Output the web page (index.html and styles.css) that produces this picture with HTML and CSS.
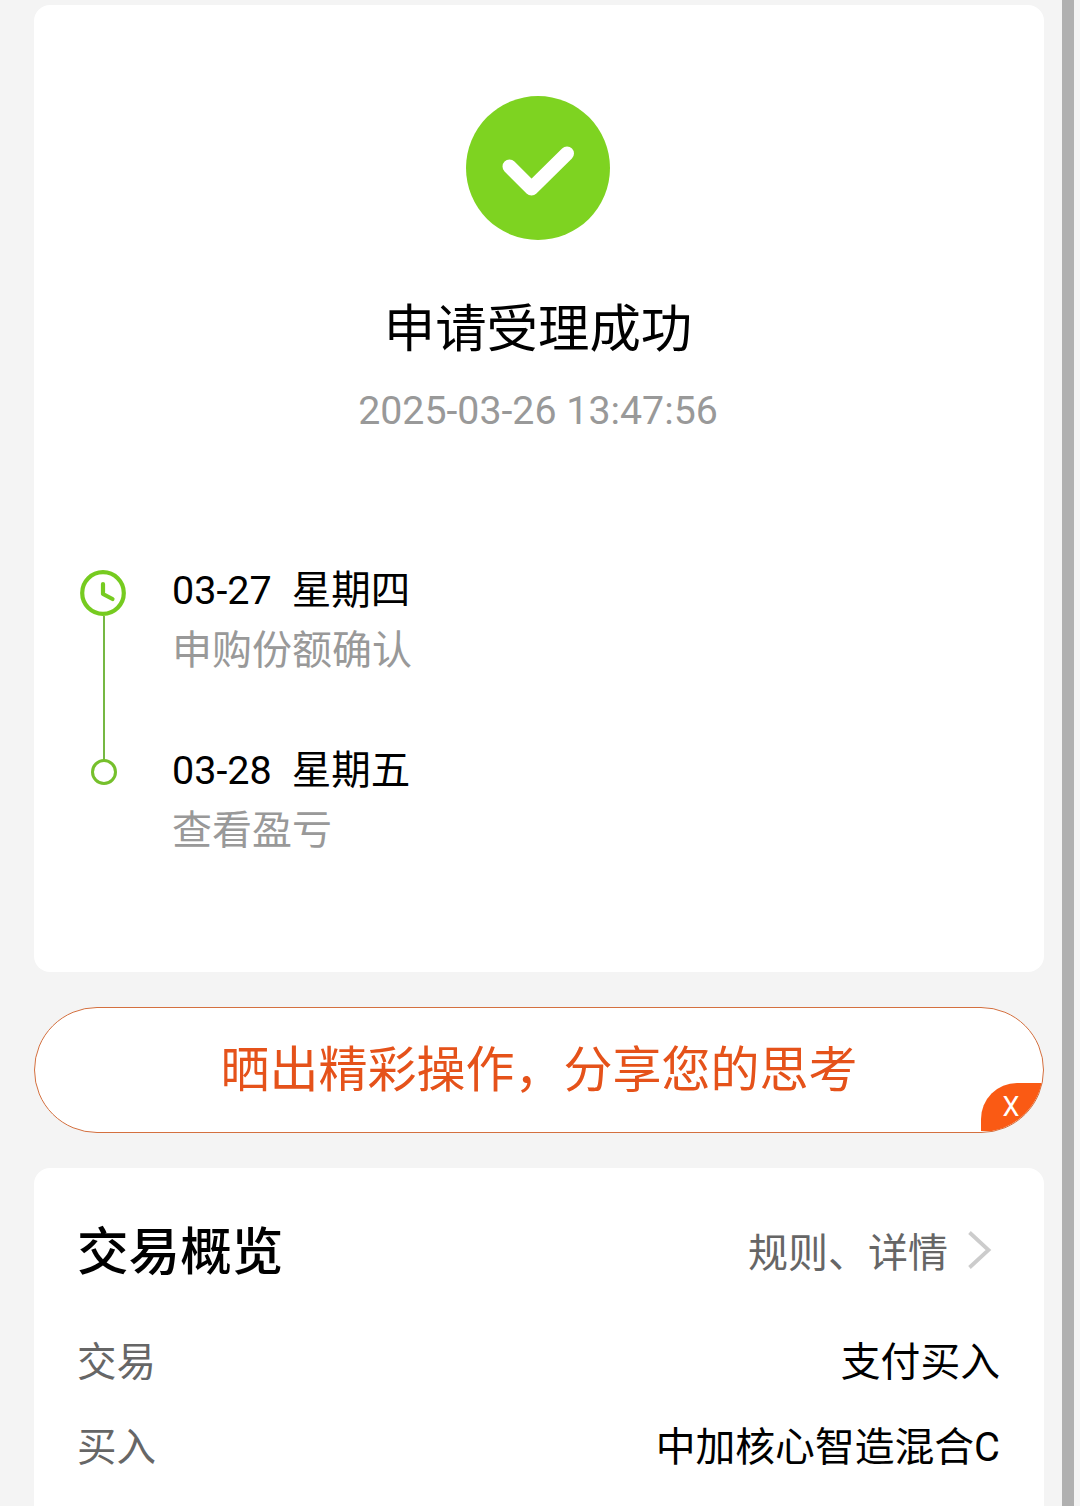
FILE: index.html
```html
<!DOCTYPE html>
<html lang="zh-CN">

<head>
    <meta charset="UTF-8">
    <meta name="viewport" content="width=device-width, initial-scale=1.0">
    <title>申请受理成功</title>
    <link rel="stylesheet" href="styles.css">
</head>

<body>
    <main class="page">
        <section class="card result">
            <svg class="success-icon" viewBox="0 0 144 144">
                <circle cx="72" cy="72" r="72" fill="#7ed321" />
                <path d="M43.5 70.5L65.5 92.5L101 57.5" fill="none" stroke="#fff" stroke-width="14" stroke-linecap="round" stroke-linejoin="round" />
            </svg>
            <h1>申请受理成功</h1>
            <p class="time">2025-03-26 13:47:56</p>

            <ul class="timeline">
                <li class="step">
                    <div class="marker">
                        <svg class="clock" viewBox="0 0 46 46">
                            <circle cx="23" cy="23" r="20.8" fill="none" stroke="#76cb20" stroke-width="4.2" />
                            <path d="M23 14V24L32.5 29" fill="none" stroke="#76cb20" stroke-width="4.2" stroke-linecap="round" stroke-linejoin="round" />
                        </svg>
                        <span class="line"></span>
                    </div>
                    <div class="step-text">
                        <p class="day"><span>03-27</span><span>星期四</span></p>
                        <p class="desc">申购份额确认</p>
                    </div>
                </li>
                <li class="step">
                    <div class="marker">
                        <span class="dot"></span>
                    </div>
                    <div class="step-text">
                        <p class="day"><span>03-28</span><span>星期五</span></p>
                        <p class="desc">查看盈亏</p>
                    </div>
                </li>
            </ul>
        </section>

        <div class="share">
            <span class="share-text">晒出精彩操作，分享您的思考</span>
            <button class="share-close">X</button>
        </div>

        <section class="card overview">
            <div class="overview-header">
                <h2>交易概览</h2>
                <a class="more">规则、详情
                    <svg class="arrow" viewBox="0 0 24 40">
                        <path d="M1.5 2.5L20.5 20L1.5 37.5" fill="none" stroke="#ccc" stroke-width="3.8" />
                    </svg>
                </a>
            </div>
            <div class="row">
                <span class="label">交易</span>
                <span class="value">支付买入</span>
            </div>
            <div class="row">
                <span class="label">买入</span>
                <span class="value">中加核心智造混合C</span>
            </div>
        </section>
    </main>
    <div class="scrollbar"></div>
</body>

</html>
```

FILE: styles.css
```css
* {
    box-sizing: border-box;
    margin: 0;
    padding: 0;
}

body {
    display: flex;
    height: 1506px;
    overflow: hidden;
    background-color: #f4f4f4;
    color: #000;
    font-family: Roboto, "Noto Sans CJK SC", sans-serif;
    font-size: 40px;
}

.page {
    flex: 1;
    padding: 5px 18px 0 34px;
}

.scrollbar {
    width: 12px;
    margin-right: 6px;
    background-color: #b0b0b0;
}

.card {
    background-color: #fff;
    border-radius: 16px;
}

/* result */
.result {
    display: flex;
    flex-direction: column;
    align-items: center;
    height: 967px;
    padding: 91px 48px 0 46px;
}

.success-icon {
    width: 144px;
    height: 144px;
}

h1 {
    margin-top: 60px;
    font-size: 51.4px;
    font-weight: 400;
    line-height: 60px;
}

.time {
    margin-top: 26px;
    color: #999;
    font-size: 39.3px;
    line-height: 50px;
}

.timeline {
    align-self: stretch;
    margin-top: 125px;
    list-style: none;
}

.step {
    display: flex;
    gap: 46px;
    height: 180px;
    line-height: 60px;
}

.marker {
    display: flex;
    flex-direction: column;
    align-items: center;
    width: 46px;
}

.clock {
    width: 46px;
    height: 46px;
    margin-top: 9px;
}

.line {
    flex: 1;
    width: 2px;
    margin: 0 0 -20px 2px;
    background-color: #76b843;
}

.dot {
    width: 26px;
    height: 26px;
    margin: 18px 0 0 1px;
    border: 3px solid #76c02c;
    border-radius: 50%;
}

.day {
    display: flex;
    gap: 20px;
    font-size: 39.5px;
}

.desc {
    color: #999;
}

/* share bar */
.share {
    position: relative;
    display: flex;
    align-items: center;
    justify-content: center;
    height: 126px;
    margin: 35px 0;
    overflow: hidden;
    background-color: #fff;
    border: 1.5px solid #d4703f;
    border-radius: 63px;
}

.share-text {
    padding-bottom: 9px;
    color: #e5521a;
    font-size: 49px;
}

.share-close {
    position: absolute;
    right: 0;
    bottom: 1px;
    width: 62px;
    height: 48px;
    padding-right: 2px;
    background-color: #fa5a14;
    border: none;
    border-top-left-radius: 36px;
    color: #fff;
    font-family: inherit;
    font-size: 27px;
}

/* overview */
.overview {
    height: 400px;
    padding: 40px 44px 0 43px;
}

.overview-header {
    display: flex;
    align-items: center;
    justify-content: space-between;
    height: 84px;
    margin-bottom: 28px;
}

h2 {
    padding-bottom: 5px;
    font-size: 51.6px;
    font-weight: 500;
}

.more {
    display: flex;
    align-items: center;
    gap: 20px;
    margin-right: 8px;
    color: #666;
}

.arrow {
    width: 24px;
    height: 40px;
}

.row {
    display: flex;
    justify-content: space-between;
    line-height: 85px;
}

.label {
    color: #666;
    font-size: 39.5px;
}

.value {
    font-size: 39.8px;
}
```
